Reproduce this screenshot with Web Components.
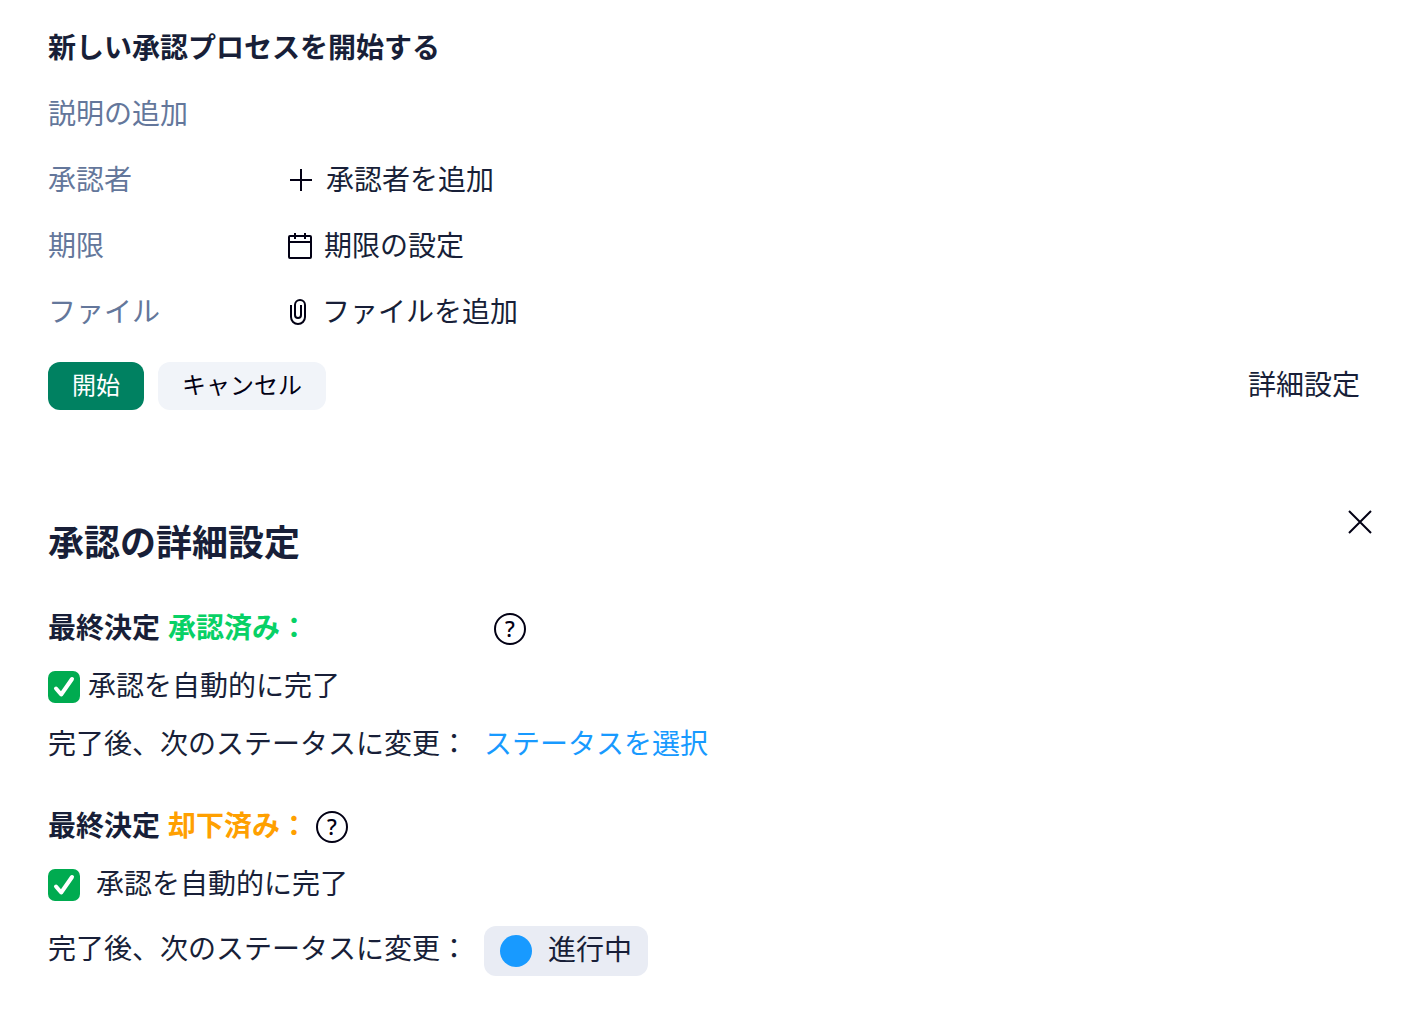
<!DOCTYPE html>
<html lang="ja">
<head>
<meta charset="utf-8">
<meta name="viewport" content="width=device-width, initial-scale=1">
<title>承認プロセス</title>
<style>
	body {
		margin: 0;
		background: #fff;
		color: #181f38;
		font: 28px/42px "Noto Sans CJK JP", sans-serif;

		/* shared colours, read inside the components */
		--text: #181f38;
		--icon: #020014;
		--muted: #64779b;
		--primary: #008161;
		--soft: #f1f4f9;
		--chip: #e9ecf4;
		--link: #189aff;
		--approved: #08d166;
		--rejected: #ffa000;
		--check: #00ab50;
	}
</style>
</head>
<body>
<approval-form></approval-form>
<approval-settings></approval-settings>

<script>
function attach(host, html) {
	const root = host.attachShadow({ mode: "open" });
	const template = document.createElement("template");
	template.innerHTML = html;
	root.appendChild(template.content.cloneNode(true));
	return root;
}

// label on the left, an action button with an icon on the right
class FieldRow extends HTMLElement {
	constructor() {
		super();
		const root = attach(this, `
<style>
	:host {
		display: flex;
		align-items: center;
	}
	label {
		flex: 0 0 240px;
		color: var(--muted);
	}
	button {
		display: flex;
		align-items: center;
		gap: 12px;
		padding: 0;
		border: none;
		background: none;
		color: inherit;
		font: inherit;
		cursor: pointer;
	}
	::slotted(svg) {
		flex: none;
		margin-top: 4px;
	}
</style>
<label for="action"></label>
<button id="action" type="button"><slot name="icon"></slot><span><slot></slot></span></button>
`);
		root.querySelector("label").textContent = this.getAttribute("label");
	}
}
customElements.define("field-row", FieldRow);

class ActionButton extends HTMLElement {
	constructor() {
		super();
		attach(this, `
<style>
	:host {
		display: block;
	}
	button {
		display: block;
		height: 48px;
		padding: 0 24px 4px;
		border: none;
		border-radius: 12px;
		background: var(--soft);
		color: var(--icon);
		font: inherit;
		font-size: 24px;
		line-height: 44px;
		cursor: pointer;
	}
	:host([kind="primary"]) button {
		background: var(--primary);
		color: #fff;
	}
	:host([kind="plain"]) button {
		padding: 0 0 6px;
		background: none;
		color: var(--text);
		font-size: 28px;
		line-height: 42px;
	}
</style>
<button type="button"><slot></slot></button>
`);
	}
}
customElements.define("action-button", ActionButton);

class HelpButton extends HTMLElement {
	constructor() {
		super();
		attach(this, `
<style>
	:host {
		display: block;
		flex: none;
	}
	button {
		display: block;
		box-sizing: border-box;
		width: 32px;
		height: 32px;
		padding: 0 0 2px;
		border: 2px solid var(--icon);
		border-radius: 50%;
		background: none;
		color: var(--icon);
		font: 500 22px/26px "Noto Sans", sans-serif;
		text-align: center;
		cursor: pointer;
	}
</style>
<button type="button">?</button>
`);
	}
}
customElements.define("help-button", HelpButton);

class CheckOption extends HTMLElement {
	constructor() {
		super();
		attach(this, `
<style>
	:host {
		display: block;
		--gap: 8px;
	}
	label {
		display: flex;
		align-items: center;
		gap: var(--gap);
	}
	.box {
		display: grid;
		width: 32px;
		height: 32px;
		margin-top: 6px;
	}
	.box > * {
		grid-area: 1 / 1;
	}
	input {
		appearance: none;
		width: 32px;
		height: 32px;
		margin: 0;
		border-radius: 7px;
		background: #dfe3ec;
	}
	input:checked {
		background: var(--check);
	}
	svg {
		visibility: hidden;
		pointer-events: none;
	}
	input:checked + svg {
		visibility: visible;
	}
</style>
<label>
	<span class="box">
		<input type="checkbox" checked>
		<svg width="32" height="32" viewBox="0 0 32 32" fill="none" stroke="#fff" stroke-width="4" stroke-linecap="round" stroke-linejoin="round"><path d="M8 17.5 13.2 23.5 24 8"/></svg>
	</span>
	<span><slot></slot></span>
</label>
`);
	}
}
customElements.define("check-option", CheckOption);

class DecisionGroup extends HTMLElement {
	constructor() {
		super();
		const root = attach(this, `
<style>
	:host {
		display: flex;
		flex-direction: column;
		gap: 16px;
	}
	header {
		display: flex;
		align-items: center;
		gap: 8px;
	}
	h3 {
		margin: 0;
		min-width: var(--title-width, 0);
		font-size: inherit;
		white-space: nowrap;
	}
	.result {
		margin-left: 8px;
		color: var(--result);
	}
	help-button {
		margin-top: 6px;
	}
	.status {
		display: flex;
		align-items: flex-start;
		gap: 16px;
	}
</style>
<header>
	<h3><span>最終決定</span><span class="result"></span></h3>
	<help-button></help-button>
</header>
<slot name="option"></slot>
<div class="status"><span>完了後、次のステータスに変更：</span><slot name="status"></slot></div>
`);
		root.querySelector(".result").textContent = this.getAttribute("result");
	}
}
customElements.define("decision-group", DecisionGroup);

class StatusChip extends HTMLElement {
	constructor() {
		super();
		attach(this, `
<style>
	:host {
		display: block;
	}
	button {
		display: flex;
		align-items: center;
		gap: 16px;
		height: 50px;
		padding: 0 16px;
		border: none;
		border-radius: 12px;
		background: var(--chip);
		color: inherit;
		font: inherit;
		cursor: pointer;
	}
	i {
		width: 32px;
		height: 32px;
		border-radius: 50%;
		background: var(--link);
	}
	span {
		padding-bottom: 6px;
	}
</style>
<button type="button"><i></i><span><slot></slot></span></button>
`);
	}
}
customElements.define("status-chip", StatusChip);

class ApprovalForm extends HTMLElement {
	constructor() {
		super();
		attach(this, `
<style>
	:host {
		display: block;
		padding: 25px 48px 0;
	}
	form {
		display: flex;
		flex-direction: column;
		gap: 24px;
	}
	h2 {
		margin: 0;
		font-size: inherit;
	}
	input {
		display: block;
		width: 100%;
		height: 42px;
		padding: 0;
		border: none;
		background: none;
		color: inherit;
		font: inherit;
		outline: none;
	}
	input::placeholder {
		color: var(--muted);
		opacity: 1;
	}
	svg {
		fill: none;
		stroke: var(--icon);
		stroke-width: 2;
	}
	footer {
		display: flex;
		gap: 14px;
		padding-top: 7px;
	}
	.more {
		margin-left: auto;
	}
</style>
<form>
	<h2>新しい承認プロセスを開始する</h2>
	<input type="text" placeholder="説明の追加" aria-label="説明">
	<field-row label="承認者">
		<svg slot="icon" width="26" height="28" viewBox="0 0 26 28"><path d="M2 14H24M13 3V25"/></svg>
		承認者を追加
	</field-row>
	<field-row label="期限">
		<svg slot="icon" width="24" height="28" viewBox="0 0 24 28"><rect x="1" y="4" width="22" height="22" rx="1"/><path d="M1 10H23M7 1V7M17 1V7"/></svg>
		期限の設定
	</field-row>
	<field-row label="ファイル">
		<svg slot="icon" width="22" height="28" viewBox="0 0 22 28"><path d="M3 7V19A7 7 0 0 0 17 19V7A5 5 0 0 0 7 7V17A3 3 0 0 0 13 17V7"/></svg>
		ファイルを追加
	</field-row>
	<footer>
		<action-button kind="primary">開始</action-button>
		<action-button>キャンセル</action-button>
		<action-button kind="plain" class="more">詳細設定</action-button>
	</footer>
</form>
`);
	}
}
customElements.define("approval-form", ApprovalForm);

class ApprovalSettings extends HTMLElement {
	constructor() {
		super();
		attach(this, `
<style>
	:host {
		display: block;
		padding: 100px 36px 48px 48px;
	}
	header {
		display: flex;
		justify-content: space-between;
		align-items: flex-start;
		margin-bottom: 38px;
	}
	h2 {
		margin: 0;
		padding-top: 3px;
		font-size: 36px;
		line-height: 54px;
	}
	.close {
		padding: 0;
		border: none;
		background: none;
		cursor: pointer;
	}
	svg {
		display: block;
		fill: none;
		stroke: var(--icon);
		stroke-width: 2;
	}
	.groups {
		display: flex;
		flex-direction: column;
		gap: 40px;
	}
	.approved {
		--result: var(--approved);
		--title-width: 438px;
	}
	.rejected {
		--result: var(--rejected);
	}
	.rejected check-option {
		--gap: 16px;
		margin-bottom: 7px;
	}
	a {
		color: var(--link);
		text-decoration: none;
	}
</style>
<header>
	<h2>承認の詳細設定</h2>
	<button class="close" type="button" aria-label="閉じる">
		<svg width="24" height="24" viewBox="0 0 24 24"><path d="M1 1 23 23M23 1 1 23"/></svg>
	</button>
</header>
<div class="groups">
	<decision-group class="approved" result="承認済み：">
		<check-option slot="option">承認を自動的に完了</check-option>
		<a slot="status" href="#status">ステータスを選択</a>
	</decision-group>
	<decision-group class="rejected" result="却下済み：">
		<check-option slot="option">承認を自動的に完了</check-option>
		<status-chip slot="status">進行中</status-chip>
	</decision-group>
</div>
`);
	}
}
customElements.define("approval-settings", ApprovalSettings);
</script>
</body>
</html>
